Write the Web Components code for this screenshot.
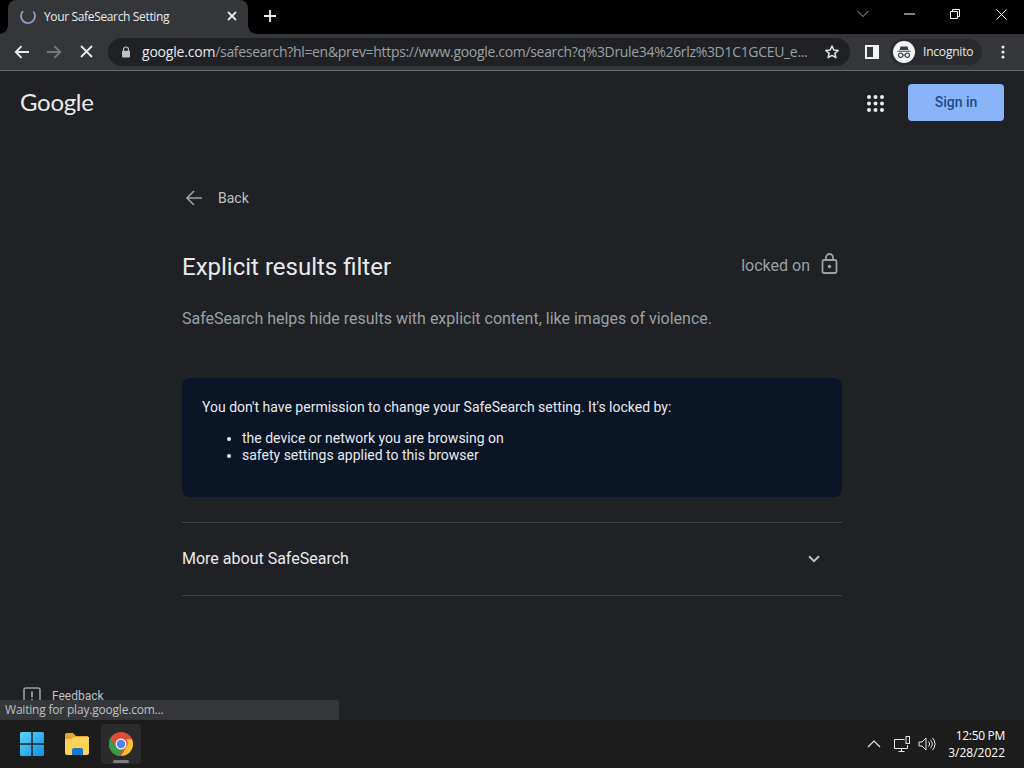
<!DOCTYPE html>
<html lang="en">
<head>
<meta charset="utf-8">
<title>Your SafeSearch Setting</title>
<style>
  html, body { margin: 0; height: 100%; background: #202124; overflow: hidden; }
  body { display: flex; flex-direction: column; height: 768px; font-family: Roboto, "Liberation Sans", sans-serif; }
</style>
</head>
<body>
<browser-tabs title-text="Your SafeSearch Setting"></browser-tabs>
<browser-toolbar></browser-toolbar>
<safe-page></safe-page>
<win-taskbar></win-taskbar>

<script>
class BrowserTabs extends HTMLElement {
  connectedCallback() {
    this.attachShadow({ mode: 'open' });
    this.shadowRoot.innerHTML = `
      <style>
        :host { display: flex; height: 34px; background: #000; color: #fff; font: 12px "Open Sans", "Noto Sans", sans-serif; flex: none; }
        .tab { position: relative; width: 240px; margin: 0 0 0 8px; height: 34px; background: #35363a; border-radius: 8px 8px 0 0;
          display: flex; align-items: center; padding: 0 10px 2px 12px; box-sizing: border-box; }
        .tab::before, .tab::after { content: ''; position: absolute; bottom: 0; width: 8px; height: 8px; }
        .tab::before { left: -8px; background: radial-gradient(circle at 0 0, #000 7.5px, #35363a 8px); }
        .tab::after { right: -8px; background: radial-gradient(circle at 100% 0, #000 7.5px, #35363a 8px); }
        .label { margin-left: 8px; flex: 1; color: #e8eaed; white-space: nowrap; letter-spacing: -.35px; }
        .new { margin: 0 0 2px 15px; width: 16px; display: flex; align-items: center; }
        .spacer { flex: 1; }
        .win { display: flex; align-items: center; height: 28px; }
        .win span { width: 46px; display: flex; justify-content: center; }
      </style>
      <div class="tab">
        <svg width="16" height="16" viewBox="0 0 16 16" fill="none"><path d="M2.6 3.6 A7 7 0 1 0 13.8 4.2" stroke="#8f9bc4" stroke-width="1.8" stroke-linecap="round"/></svg>
        <span class="label">${this.getAttribute('title-text')}</span>
        <svg width="12" height="12" viewBox="0 0 12 12"><path d="M2 2l8 8M10 2l-8 8" stroke="#e8eaed" stroke-width="1.8"/></svg>
      </div>
      <div class="new">
        <svg width="14" height="14" viewBox="0 0 14 14"><path d="M7 1v12M1 7h12" stroke="#e8eaed" stroke-width="1.8"/></svg>
      </div>
      <div class="spacer"></div>
      <div class="win">
        <span style="width:40px;margin-right:3px"><svg width="12" height="8" viewBox="0 0 12 8" fill="none"><path d="M.7 1l5.3 5.6L11.3 1" stroke="#aaa" stroke-width="1"/></svg></span>
        <span><svg width="11" height="2" viewBox="0 0 11 2"><path d="M0 1h11" stroke="#fff"/></svg></span>
        <span><svg width="10" height="10" viewBox="0 0 10 10" fill="none"><path d="M.5 2.5h7v7h-7zM2.5 2.5v-2h7v7h-2" stroke="#fff"/></svg></span>
        <span><svg width="11" height="11" viewBox="0 0 11 11"><path d="M.5.5l10 10M10.5.5l-10 10" stroke="#fff" stroke-width="1"/></svg></span>
      </div>
    `;
  }
}
customElements.define('browser-tabs', BrowserTabs);

class BrowserToolbar extends HTMLElement {
  connectedCallback() {
    this.attachShadow({ mode: 'open' });
    this.shadowRoot.innerHTML = `
      <style>
        :host { display: flex; align-items: center; height: 37px; box-sizing: border-box; padding-bottom: 1px; background: #35363a; border-bottom: 1px solid #6a6b6e; flex: none; font-family: "Open Sans", "Noto Sans", sans-serif; }
        .nav { display: flex; align-items: center; }
        .nav span { width: 32px; display: flex; justify-content: center; }
        .omni { margin-left: 6px; width: 742px; height: 28px; border-radius: 14px; background: #202124; display: flex; align-items: center; box-sizing: border-box; padding: 0 10px 0 13px; }
        .url { margin-left: 11px; flex: 1; font-size: 14px; color: #9aa0a6; white-space: nowrap; letter-spacing: -.32px; }
        .url b { font-weight: 400; color: #e8eaed; letter-spacing: -.2px; }
        .side { margin-left: 15px; display: flex; }
        .incog { margin-left: 11px; width: 92px; height: 26px; border-radius: 13px; background: #292a2d; display: flex; align-items: center; box-sizing: border-box; padding-left: 3px; color: #e8eaed; font-size: 12px; letter-spacing: -.2px; }
        .incog span { margin-left: 8px; }
        .dots { margin-left: 19px; display: flex; }
      </style>
      <div class="nav" style="margin-left:6px">
        <span><svg width="16" height="14" viewBox="0 0 16 14" fill="none"><path d="M15 7H2M7.500 1.200 1.800 7l5.700 5.800" stroke="#e8eaed" stroke-width="1.900"/></svg></span>
        <span><svg width="16" height="14" viewBox="0 0 16 14" fill="none"><path d="M1 7h13M8.500 1.200 14.200 7l-5.700 5.800" stroke="#75777a" stroke-width="1.900"/></svg></span>
        <span><svg width="13" height="13" viewBox="0 0 13 13"><path d="M1 1l11 11M12 1L1 12" stroke="#e8eaed" stroke-width="1.800"/></svg></span>
      </div>
      <div class="omni">
        <svg width="10" height="12" viewBox="0 0 10 12" style="flex:none"><path d="M2.500 5V3.500a2.500 2.500 0 0 1 5 0V5" fill="none" stroke="#bdc1c6" stroke-width="1.200"/><rect x="1" y="4.800" width="8" height="6.700" rx="1" fill="#bdc1c6"/></svg>
        <div class="url"><b>google.com</b>/safesearch?hl=en&amp;prev=https://www.google.com/search?q%3Drule34%26rlz%3D1C1GCEU_e...</div>
        <svg width="16" height="16" viewBox="0 0 24 24" fill="none" style="flex:none"><path d="M12 3l2.700 6.100 6.600.6-5 4.400 1.500 6.500L12 17.200l-5.800 3.400 1.500-6.500-5-4.400 6.600-.6z" stroke="#e8eaed" stroke-width="2.200" stroke-linejoin="round"/></svg>
      </div>
      <div class="side">
        <svg width="14" height="14" viewBox="0 0 14 14"><rect x="1" y="1" width="12" height="12" fill="#35363a" stroke="#f1f3f4" stroke-width="2"/><rect x="8" y="1" width="5" height="12" fill="#f1f3f4"/></svg>
      </div>
      <div class="incog">
        <svg width="22" height="22" viewBox="0 0 22 22"><circle cx="11" cy="11" r="11" fill="#f1f3f4"/><path d="M7.500 5.500h7l1 3.500h-9zM4.500 9.800h13v1h-13z" fill="#3c4043"/><circle cx="7.700" cy="14.200" r="2.200" fill="none" stroke="#3c4043" stroke-width="1.100"/><circle cx="14.300" cy="14.200" r="2.200" fill="none" stroke="#3c4043" stroke-width="1.100"/><path d="M9.800 14h2.400" stroke="#3c4043"/></svg>
        <span>Incognito</span>
      </div>
      <div class="dots">
        <svg width="4" height="14" viewBox="0 0 4 14" fill="#e8eaed"><circle cx="2" cy="2" r="1.600"/><circle cx="2" cy="7" r="1.600"/><circle cx="2" cy="12" r="1.600"/></svg>
      </div>
    `;
  }
}
customElements.define('browser-toolbar', BrowserToolbar);

class PageHeader extends HTMLElement {
  connectedCallback() {
    this.attachShadow({ mode: 'open' });
    const dots = [];
    for (let y = 0; y < 3; y++) {
      for (let x = 0; x < 3; x++) dots.push(`<circle cx="${2 + x * 6.500}" cy="${2 + y * 6.500}" r="2"/>`);
    }
    this.shadowRoot.innerHTML = `
      <style>
        :host { display: flex; align-items: center; padding: 13px 20px 0 20px; height: 37px; }
        .logo { font: 400 24px Lato, "Open Sans", sans-serif; color: #e8eaed; letter-spacing: -.3px; margin-top: -2px; }
        .spacer { flex: 1; }
        svg { margin-top: 1px; }
        button { margin-left: 24px; width: 96px; height: 37px; border: 0; border-radius: 4px; background: #8ab4f8; color: #1f4a8c; font: 500 14px Roboto, sans-serif; padding: 0 0 2px; }
      </style>
      <span class="logo">Google</span>
      <div class="spacer"></div>
      <svg width="17" height="17" viewBox="0 0 17 17" fill="#e8eaed">${dots.join('')}</svg>
      <button>Sign in</button>
    `;
  }
}
customElements.define('page-header', PageHeader);

class NoticeBox extends HTMLElement {
  connectedCallback() {
    this.attachShadow({ mode: 'open' });
    this.shadowRoot.innerHTML = `
      <style>
        :host { display: block; height: 119px; box-sizing: border-box; padding: 21px 20px 0; background: #0a1526; border-radius: 8px; color: #e8eaed; font-size: 14px; line-height: 17px; }
        ul { margin: 14px 0 0; padding-left: 40px; }
      </style>
      <slot name="lead"></slot>
      <ul>
        <li><slot name="one"></slot></li>
        <li><slot name="two"></slot></li>
      </ul>
    `;
  }
}
customElements.define('notice-box', NoticeBox);

class SafePage extends HTMLElement {
  connectedCallback() {
    this.attachShadow({ mode: 'open' });
    this.shadowRoot.innerHTML = `
      <style>
        :host { display: flex; flex-direction: column; flex: 1; min-height: 0; position: relative; background: #202124; color: #e8eaed; font-family: Roboto, sans-serif; }
        main { width: 660px; margin: 0 0 0 182px; flex: 1; }
        .back { display: flex; align-items: center; margin-top: 65px; height: 24px; color: #bdc1c6; font-size: 14px; }
        .back svg { margin: 0 16px 0 4px; }
        .head { display: flex; align-items: center; justify-content: space-between; margin-top: 41px; height: 32px; }
        h1 { margin: 0; font-weight: 400; font-size: 24px; color: #e8eaed; }
        .lock { display: flex; align-items: center; color: #9aa0a6; font-size: 16px; padding-right: 4px; margin-top: -3px; }
        .lock svg { margin-left: 11px; margin-top: -4px; width: 17px; }
        .sub { margin: 26px 0 0; font-size: 16px; line-height: 20px; color: #9aa0a6; }
        notice-box { margin-top: 49px; }
        .more { margin-top: 25px; height: 72px; border-top: 1px solid #3c4043; border-bottom: 1px solid #3c4043; display: flex; align-items: center; justify-content: space-between; font-size: 16px; color: #e8eaed; padding-right: 22px; }
        .more span { margin-top: -1px; }
        .feedback { display: flex; align-items: center; position: absolute; left: 23px; bottom: 15px; font-size: 12px; color: #bdc1c6; }
        .feedback svg { margin-right: 11px; }
        .bubble { position: absolute; left: 0; bottom: 0; width: 339px; height: 20px; box-sizing: border-box; padding: 0 5px; background: #35363a; border-radius: 0 3px 0 0; color: #bdc1c6; font: 12px/20px "Open Sans", "Noto Sans", sans-serif; letter-spacing: -.2px; }
      </style>
      <page-header></page-header>
      <main>
        <div class="back">
          <svg width="16" height="16" viewBox="0 0 16 16" fill="none"><path d="M16 8H1.500M8 1 1 8l7 7" stroke="#9aa0a6" stroke-width="1.600"/></svg>
          <span>Back</span>
        </div>
        <div class="head">
          <h1>Explicit results filter</h1>
          <div class="lock">
            <span>locked on</span>
            <svg width="16" height="21" viewBox="0 0 16 21" fill="none"><path d="M4.500 7V4.500a3.500 3.500 0 0 1 7 0V7" stroke="#9aa0a6" stroke-width="1.800"/><rect x="1" y="7" width="14" height="13" rx="1.500" stroke="#9aa0a6" stroke-width="1.800"/><circle cx="8" cy="13.500" r="1.800" fill="#9aa0a6"/></svg>
          </div>
        </div>
        <p class="sub">SafeSearch helps hide results with explicit content, like images of violence.</p>
        <notice-box>
          <span slot="lead">You don't have permission to change your SafeSearch setting. It's locked by:</span>
          <span slot="one">the device or network you are browsing on</span>
          <span slot="two">safety settings applied to this browser</span>
        </notice-box>
        <div class="more">
          <span>More about SafeSearch</span>
          <svg width="12" height="8" viewBox="0 0 12 8" fill="none"><path d="M1 1.200l5 5 5-5" stroke="#bdc1c6" stroke-width="2"/></svg>
        </div>
      </main>
      <div class="feedback">
        <svg width="18" height="18" viewBox="0 0 18 18" fill="none"><rect x="1" y="1" width="16" height="16" rx="2" stroke="#9aa0a6" stroke-width="1.600"/><path d="M9 4.500v6M9 12v2" stroke="#9aa0a6" stroke-width="1.800"/></svg>
        <span>Feedback</span>
      </div>
      <div class="bubble">Waiting for play.google.com...</div>
    `;
  }
}
customElements.define('safe-page', SafePage);

class WinTaskbar extends HTMLElement {
  connectedCallback() {
    this.attachShadow({ mode: 'open' });
    this.shadowRoot.innerHTML = `
      <style>
        :host { display: flex; align-items: center; height: 48px; background: #1c1c1c; flex: none; color: #fff; font: 12px "Open Sans", "Noto Sans", sans-serif; }
        .apps { display: flex; margin-left: 9px; }
        .app { width: 45px; height: 40px; display: flex; align-items: center; justify-content: center; position: relative; margin-right: -1px; }
        .app.on { width: 40px; margin-left: 3px; background: #2b2b2b; border-radius: 4px; }
        .app.on::after { content: ''; position: absolute; bottom: 1px; left: 12px; width: 16px; height: 3px; border-radius: 2px; background: #7d7d7d; }
        .spacer { flex: 1; }
        .tray { display: flex; align-items: center; gap: 7px; }
        .clock { width: 64px; margin: 0 19px 0 5px; text-align: right; line-height: 17px; }
        .time { letter-spacing: -.3px; }
      </style>
      <div class="apps">
        <div class="app">
          <svg width="24" height="24" viewBox="0 0 24 24"><defs><linearGradient id="w" x1="0" y1="0" x2="1" y2="1"><stop offset="0" stop-color="#5fd4fb"/><stop offset="1" stop-color="#0f90e0"/></linearGradient></defs><path fill="url(#w)" d="M0 1.500A1.500 1.500 0 0 1 1.500 0H11.300v11.300H0zM12.700 0h9.800A1.500 1.500 0 0 1 24 1.500v9.800H12.700zM0 12.700h11.300V24H1.500A1.500 1.500 0 0 1 0 22.500zM12.700 12.700H24v9.800a1.500 1.500 0 0 1-1.500 1.500h-9.800z"/></svg>
        </div>
        <div class="app" style="margin-left:1px">
          <svg width="26" height="22" viewBox="0 0 26 22"><path d="M1 2a2 2 0 0 1 2-2h6l3 3h12v5H1z" fill="#e2a92c"/><path d="M1 20V6h6.500l3-2H25v16a2 2 0 0 1-2 2H3a2 2 0 0 1-2-2z" fill="#fbd35a"/><path d="M8 22v-5a2 2 0 0 1 2-2h7a2 2 0 0 1 2 2v5z" fill="#1a78c8"/></svg>
        </div>
        <div class="app on">
          <svg width="24" height="24" viewBox="0 0 24 24"><circle cx="12" cy="12" r="12" fill="#dd4b39"/><path d="M12 24A12 12 0 0 1 1.600 6l5.200 9a6 6 0 0 0 6.500 2.900L9.900 23.800z" fill="#2f9e4f"/><path d="M23 7.200A12 12 0 0 1 12 24l5.200-9A6 6 0 0 0 17 7.200z" fill="#fbc02d"/><circle cx="12" cy="12" r="5.500" fill="#f1f3f4"/><circle cx="12" cy="12" r="4.200" fill="#4a86e8"/></svg>
        </div>
      </div>
      <div class="spacer"></div>
      <div class="tray">
        <svg width="14" height="8" viewBox="0 0 14 8" fill="none"><path d="M1 7l6-6 6 6" stroke="#e6e6e6" stroke-width="1.200"/></svg>
        <svg width="17" height="17" viewBox="0 0 17 17" fill="none" style="margin-left:6px"><path d="M10.500 3.500H.5v9h13V9M4.500 15.500h6M7.500 12.500v3" stroke="#e6e6e6"/><rect x="12" y=".5" width="3.500" height="7" stroke="#e6e6e6"/></svg>
        <svg width="18" height="14" viewBox="0 0 18 14" fill="none" style="margin-left:0"><path d="M1 5h3l4-4v12l-4-4H1zM10.500 4.500a3.500 3.500 0 0 1 0 5M12.500 2.800a6 6 0 0 1 0 8.400M14.500 1a8.500 8.500 0 0 1 0 12" stroke="#e6e6e6"/></svg>
      </div>
      <div class="clock"><span class="time">12:50 PM</span><br>3/28/2022</div>
    `;
  }
}
customElements.define('win-taskbar', WinTaskbar);
</script>
</body>
</html>
